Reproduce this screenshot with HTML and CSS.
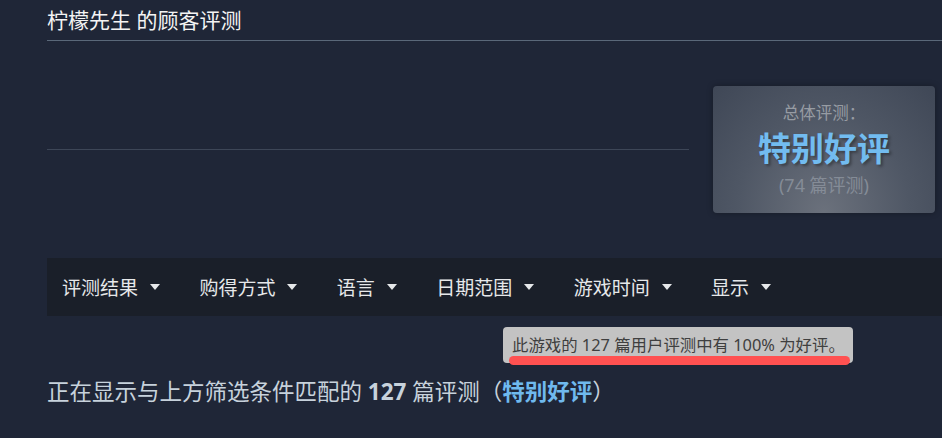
FILE: index.html
```html
<!DOCTYPE html>
<html lang="zh-CN">
<head>
  <meta charset="UTF-8" />
  <meta name="viewport" content="width=device-width, initial-scale=1.0"/>
  <title>柠檬先生 的顾客评测</title>
  <link rel="stylesheet" href="styles.css">
</head>
<body>
  <div class="page">
    <h2 class="reviews-title">柠檬先生 的顾客评测</h2>

    <div class="summary-row">
      <div class="summary-left">
        <div class="divider"></div>
      </div>
      <div class="summary-box">
        <div class="summary-label">总体评测：</div>
        <div class="summary-rating">特别好评</div>
        <div class="summary-count">(74 篇评测)</div>
      </div>
    </div>

    <div class="filters">
      <div class="filter">评测结果<span class="arrow"></span></div>
      <div class="filter">购得方式<span class="arrow"></span></div>
      <div class="filter">语言<span class="arrow"></span></div>
      <div class="filter">日期范围<span class="arrow"></span></div>
      <div class="filter">游戏时间<span class="arrow"></span></div>
      <div class="filter">显示<span class="arrow"></span></div>
    </div>

    <!-- hover tooltip over the summary -->
    <div class="tooltip">此游戏的 127 篇用户评测中有 100% 为好评。</div>
    <div class="mark"></div>

    <p class="results">正在显示与上方筛选条件匹配的 <b>127</b> 篇评测（<span class="positive">特别好评</span>）</p>
  </div>
</body>
</html>
```

FILE: styles.css
```css
body {
  font-family: "Noto Sans", "Noto Sans CJK SC", sans-serif;
  background-color: #1f2637;
  margin: 0;
  padding: 0;
  width: 942px;
  height: 438px;
  overflow: hidden;
}

.page {
  position: relative;
  margin-left: 47px;
  width: 960px;
}

.reviews-title {
  margin: 0;
  padding: 5px 0 5px;
  font-size: 21px;
  font-weight: normal;
  line-height: 30px;
  color: #f4f4f4;
  border-bottom: 1px solid #5a6879;
}

.summary-row {
  display: flex;
  align-items: center;
  gap: 24px;
  margin-top: 45px;
}

.summary-left {
  width: 642px;
}

.divider {
  height: 1px;
  background-color: #3d4657;
}

.summary-box {
  display: flex;
  flex-direction: column;
  align-items: center;
  width: 222px;
  height: 127px;
  box-sizing: border-box;
  padding-top: 14px;
  border-radius: 4px;
  background: radial-gradient(ellipse at 50% 100%, #6b717c 0%, #4f5765 55%, #3f4756 100%);
  box-shadow: 0 0 6px rgba(0, 0, 0, 0.3);
}

.summary-label {
  font-size: 16.5px;
  line-height: 26px;
  color: #979ca3;
}

.summary-rating {
  font-size: 33px;
  font-weight: bold;
  line-height: 46px;
  color: #72bcf0;
  text-shadow: 2px 2px 3px rgba(0, 0, 0, 0.35);
}

.summary-count {
  font-size: 18px;
  line-height: 26px;
  color: #858c97;
}

.filters {
  display: flex;
  align-items: center;
  gap: 39.4px;
  height: 58px;
  margin-top: 45px;
  padding-left: 15px;
  background-color: #1a1f29;
}

.filter {
  display: flex;
  align-items: center;
  font-size: 19px;
  color: #e6e8ea;
  cursor: pointer;
}

.arrow {
  margin-left: 12px;
  width: 0;
  height: 0;
  border-left: 5px solid transparent;
  border-right: 5px solid transparent;
  border-top: 6px solid #e6e8ea;
}

.tooltip {
  position: absolute;
  left: 456px;
  top: 327px;
  width: 350px;
  height: 36px;
  box-sizing: border-box;
  padding: 0 9px;
  font-size: 16.4px;
  line-height: 36px;
  color: #3f3f3f;
  background-color: #c3c3c3;
  border-radius: 4px;
  white-space: nowrap;
}

.mark {
  position: absolute;
  left: 462px;
  top: 356px;
  width: 341px;
  height: 9px;
  border-radius: 5px;
  background-color: #ff5151;
}

.results {
  margin: 61px 0 0;
  font-size: 22.5px;
  line-height: 30px;
  color: #c7d2dc;
}

.results b {
  font-weight: bold;
}

.results .positive {
  font-weight: bold;
  color: #6fb9ee;
}
```
